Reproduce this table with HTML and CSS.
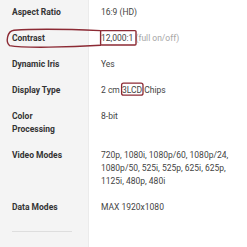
FILE: index.html
```html
<!DOCTYPE html>
<html lang="en">
<head>
    <meta charset="UTF-8">
    <meta name="viewport" content="width=device-width, initial-scale=1.0">
    <title>Projector Specifications</title>
    <link rel="stylesheet" href="styles.css">
</head>
<body>
    <div class="page">
        <dl class="specs">
            <div class="row">
                <dt>Aspect Ratio</dt>
                <dd>16:9 (HD)</dd>
            </div>
            <div class="row">
                <dt>Contrast</dt>
                <dd>12,000:1 <span class="note">(full on/off)</span></dd>
            </div>
            <div class="row">
                <dt>Dynamic Iris</dt>
                <dd>Yes</dd>
            </div>
            <div class="row">
                <dt>Display Type</dt>
                <dd>2 cm 3LCD Chips</dd>
            </div>
            <div class="row">
                <dt>Color Processing</dt>
                <dd>8-bit</dd>
            </div>
            <div class="row">
                <dt>Video Modes</dt>
                <dd>720p, 1080i, 1080p/60, 1080p/24, 1080p/50, 525i, 525p, 625i, 625p, 1125i, 480p, 480i</dd>
            </div>
            <div class="row">
                <dt>Data Modes</dt>
                <dd>MAX 1920x1080</dd>
            </div>
            <div class="row row-end">
                <dt><div class="rule"></div></dt>
                <dd></dd>
            </div>
        </dl>

        <!-- pen marks drawn over the table -->
        <svg class="marks" width="247" height="247" viewBox="0 0 247 247">
            <path d="M100.5 30.6 C75 29.5 35 28.8 14 30.2 C7 31 5.5 42 9.5 45.6 C24 48.3 70 47.2 100.5 45.2"
                  fill="none" stroke="#8c2a34" stroke-width="1.4" stroke-linecap="round"/>
            <rect x="100.6" y="30.6" width="35.4" height="14.4" rx="1"
                  fill="none" stroke="#8c2a34" stroke-width="1.4"/>
            <rect x="121.6" y="83.2" width="21.4" height="12" rx="2"
                  fill="none" stroke="#8c2a34" stroke-width="1.3"/>
        </svg>
    </div>
</body>
</html>
```

FILE: styles.css
```css
* {
    margin: 0;
    padding: 0;
    box-sizing: border-box;
}

body {
    font-family: Roboto, "Liberation Sans", sans-serif;
    font-size: 8.5px;
    line-height: 13px;
    background: #fff;
    color: #444;
}

.page {
    position: relative;
    height: 247px;
    overflow: hidden;
}

.specs {
    display: flex;
    flex-direction: column;
    min-height: 248px;
    margin-top: -1px;
}

.row {
    display: flex;
}

.row dt {
    flex: 0 0 89px;
    padding: 6.5px 12px;
    background: #f4f4f4;
    border-right: 1px solid #ebebeb;
    font-weight: 700;
    color: #333;
}

.row dd {
    flex: 1;
    padding: 6.5px 6px 6.5px 12px;
    color: #444;
}

.note {
    color: #a6a6a6;
}

.row-end {
    flex: 1;
}

.row-end dt {
    padding-top: 11px;
}

.rule {
    width: 60px;
    height: 1px;
    background: #dedede;
}

.marks {
    position: absolute;
    top: 0;
    left: 0;
    pointer-events: none;
}
```
